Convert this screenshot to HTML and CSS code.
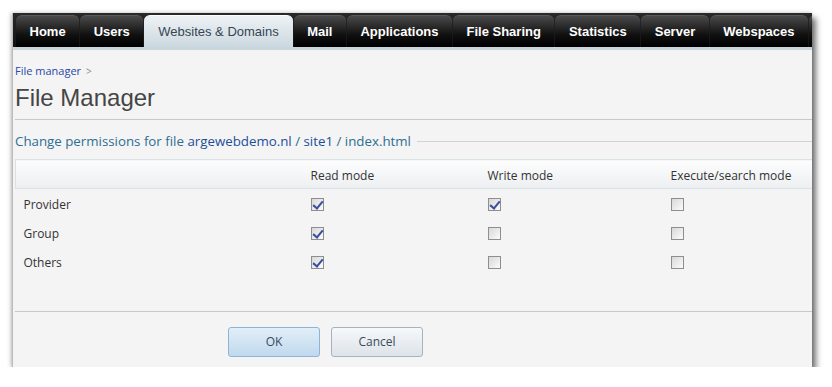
FILE: index.html
```html
<!DOCTYPE html>
<html lang="en">
<head>
  <meta charset="UTF-8" />
  <title>File Manager</title>
  <link rel="stylesheet" href="styles.css">
</head>
<body>
  <div class="window">
    <div class="tabs">
      <div class="tab">Home</div>
      <div class="tab">Users</div>
      <div class="tab active">Websites &amp; Domains</div>
      <div class="tab">Mail</div>
      <div class="tab">Applications</div>
      <div class="tab">File Sharing</div>
      <div class="tab">Statistics</div>
      <div class="tab">Server</div>
      <div class="tab">Webspaces</div>
      <div class="tab more"></div>
    </div>

    <div class="content">
      <div class="crumbs"><a href="#">File manager</a> <span class="sep">&gt;</span></div>
      <h1>File Manager</h1>

      <fieldset class="perms">
        <legend>Change permissions for file <a href="#">argewebdemo.nl</a> / <a href="#">site1</a> / index.html</legend>

        <table>
          <thead>
            <tr>
              <th class="who"></th>
              <th class="read">Read mode</th>
              <th class="write">Write mode</th>
              <th>Execute/search mode</th>
            </tr>
          </thead>
          <tbody>
            <tr>
              <td>Provider</td>
              <td><span class="check on"></span></td>
              <td><span class="check on"></span></td>
              <td><span class="check"></span></td>
            </tr>
            <tr>
              <td>Group</td>
              <td><span class="check on"></span></td>
              <td><span class="check"></span></td>
              <td><span class="check"></span></td>
            </tr>
            <tr>
              <td>Others</td>
              <td><span class="check on"></span></td>
              <td><span class="check"></span></td>
              <td><span class="check"></span></td>
            </tr>
          </tbody>
        </table>
      </fieldset>

      <div class="buttons">
        <button class="ok">OK</button>
        <button>Cancel</button>
      </div>
    </div>
  </div>
</body>
</html>
```

FILE: styles.css
```css
* {
  margin: 0;
  padding: 0;
  box-sizing: border-box;
}
body {
  background: #fff;
  font-family: 'Open Sans', 'DejaVu Sans', sans-serif;
  font-size: 12px;
  color: #333;
}
.window {
  width: 800px;
  height: 354px;
  margin: 13px 0 0 12px;
  background: #f4f4f4;
  border-left: 1px solid #bbb;
  box-shadow: 4px 5px 6px rgba(0, 0, 0, 0.55), -1px 0 4px rgba(0, 0, 0, 0.25);
  overflow: hidden;
}
.tabs {
  display: flex;
  gap: 1px;
  height: 37px;
  padding: 2px 0 0 3px;
  background: linear-gradient(#2a2a2a, #111);
  border-bottom: 3px solid #c9d6dd;
}
.tab {
  flex: none;
  height: 32px;
  padding: 0 13.5px;
  line-height: 31px;
  border-radius: 6px 6px 0 0;
  border-top: 1px solid #5a5a5a;
  background: linear-gradient(#4a4a4a, #111 60%, #000);
  color: #fff;
  font-family: 'Liberation Sans', Arial, sans-serif;
  font-weight: bold;
  font-size: 13px;
  white-space: nowrap;
}
.tab.active {
  padding: 0 14px;
  background: linear-gradient(#eef2f5, #cbd8df);
  border-top-color: #fff;
  color: #364653;
  font-weight: normal;
}
.tab.more {
  width: 20px;
}
.content {
  padding: 14px 0 0 2px;
}
.crumbs {
  font-size: 11px;
  line-height: 14px;
}
.crumbs a {
  color: #2a46a8;
  text-decoration: none;
}
.crumbs .sep {
  color: #888;
  font-size: 10px;
  margin-left: 2px;
}
h1 {
  font-family: 'Liberation Sans', Arial, sans-serif;
  font-weight: normal;
  font-size: 24px;
  color: #454545;
  line-height: 28px;
  margin-top: 6px;
  padding-bottom: 7px;
  border-bottom: 1px solid #c8c8c8;
}
.perms {
  border: none;
  border-top: 1px solid #d2d2d2;
  margin-top: 12px;
}
.perms legend {
  padding-right: 6px;
  font-size: 13.3px;
  color: #2b6f93;
}
.perms legend a {
  color: #1b4f9a;
  text-decoration: none;
}
table {
  width: 100%;
  border-collapse: collapse;
  margin-top: 9px;
}
thead th {
  height: 29px;
  text-align: left;
  font-weight: normal;
  color: #333;
  background: linear-gradient(#fdfdfd, #eceff1);
  border-top: 1px solid #d9e2e7;
  border-bottom: 1px solid #d9e2e7;
  padding-top: 2px;
}
thead th:first-child {
  border-left: 1px solid #d9e2e7;
}
th.who {
  width: 295px;
}
th.read {
  width: 177px;
}
th.write {
  width: 183px;
}
tbody td {
  height: 29px;
  padding-top: 3px;
  vertical-align: middle;
}
tbody td:first-child {
  padding-left: 8px;
}
.check {
  display: block;
  width: 13px;
  height: 13px;
  border: 1px solid #8e8e8e;
  background: linear-gradient(135deg, #d8d8d8, #fbfbfb);
  position: relative;
}
.check.on::after {
  content: '';
  position: absolute;
  left: 3px;
  top: 0;
  width: 4px;
  height: 8px;
  border: solid #3a4f9c;
  border-width: 0 2px 2px 0;
  transform: rotate(40deg);
}
.buttons {
  margin-top: 35px;
  padding: 15px 0 0 213px;
  border-top: 1px solid #c8c8c8;
  display: flex;
  gap: 11px;
}
button {
  width: 92px;
  height: 30px;
  font-family: 'Open Sans', sans-serif;
  font-size: 12px;
  color: #394a5a;
  border: 1px solid #a7b3bc;
  border-radius: 3px;
  background: linear-gradient(#f6f8fa, #dde3e8);
}
button.ok {
  border-color: #8db5d8;
  background: linear-gradient(#e2eef8, #c0d9ee);
}
```
